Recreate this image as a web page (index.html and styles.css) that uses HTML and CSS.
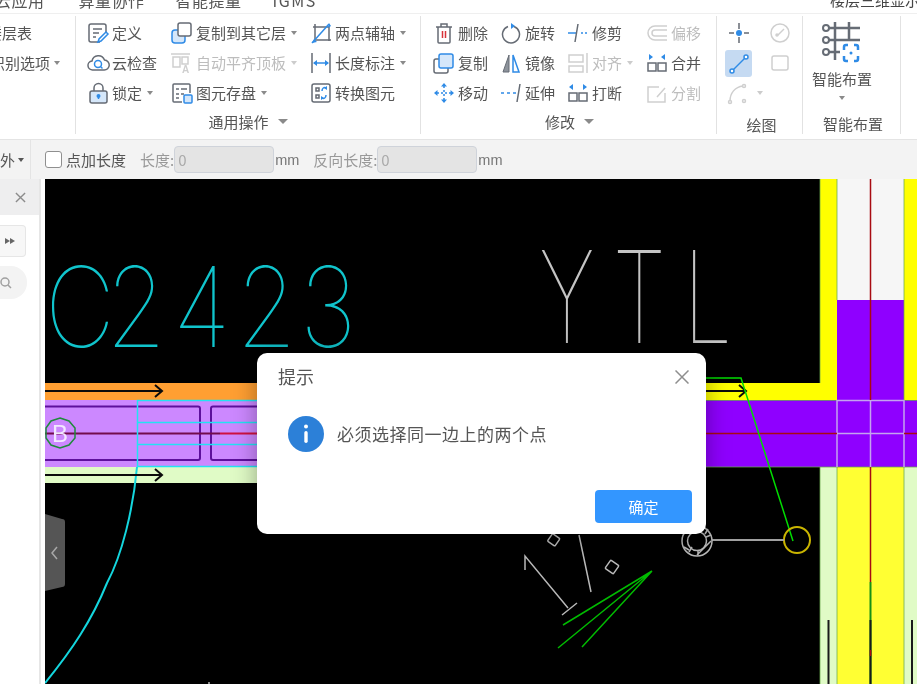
FILE: index.html
```html
<!DOCTYPE html>
<html lang="zh-CN">
<head>
<meta charset="utf-8">
<title>提示</title>
<link rel="stylesheet" href="styles.css">
</head>
<body>
<div class="app">
  <header class="menu">
    <span class="menu-item first">云应用</span>
    <span class="menu-item">算量协作</span>
    <span class="menu-item">智能提量</span>
    <span class="menu-item latin">IGMS</span>
    <span class="menu-right">楼层三维显示</span>
  </header>

  <section class="ribbon">
    <div class="group g-first">
      <div class="clip-row r1">楼层表</div>
      <div class="clip-row r2">识别选项<i class="caret"></i></div>
    </div>

    <div class="group g-general">
      <div class="tools">
        <div class="tool"><svg class="ic" viewBox="0 0 22 22"><path class="s" d="M13 20H4a2 2 0 0 1-2-2V4a2 2 0 0 1 2-2h13a2 2 0 0 1 2 2v6"/><path class="s" d="M6 7h9M6 11h6M6 15h3"/><path class="b2" d="M11 20l1-3 7-7 2 2-7 7z"/></svg><span>定义</span></div>
        <div class="tool"><svg class="ic" viewBox="0 0 22 22"><rect class="bf" x="1" y="8" width="13" height="13" rx="3"/><rect class="sw" x="7" y="1" width="13" height="13" rx="2"/></svg><span>复制到其它层</span><i class="caret"></i></div>
        <div class="tool"><svg class="ic" viewBox="0 0 22 22"><path class="s" d="M5 2v16h16M3 5h16v14"/><path class="b2" d="M2 21L19 2"/><path class="bs" d="M19 1l-1 5 3-2zM2 21l5-1-3-3z"/></svg><span>两点辅轴</span><i class="caret"></i></div>

        <div class="tool"><svg class="ic" viewBox="0 0 22 22"><path class="s" d="M6 18a4.5 4.5 0 0 1-1-9 6.5 6.5 0 0 1 12.500-1 5 5 0 0 1-.5 10z"/><circle class="b2" cx="11" cy="12" r="3.500"/><path class="b2" d="M13.500 14.500l2 2"/></svg><span>云检查</span></div>
        <div class="tool off"><svg class="ic" viewBox="0 0 22 22"><path class="d" d="M0 2h19"/><path class="d" d="M2 5h7v10H2zM11 5h6v7h-6z"/><text class="ic-a" x="11" y="21">A</text></svg><span>自动平齐顶板</span><i class="caret"></i></div>
        <div class="tool"><svg class="ic" viewBox="0 0 22 22"><path class="s" d="M2 1v20M20 1v20"/><path class="b2" d="M4 11h14"/><path class="bs" d="M3 11l4-3v6zM19 11l-4-3v6z"/></svg><span>长度标注</span><i class="caret"></i></div>

        <div class="tool"><svg class="ic" viewBox="0 0 22 22"><rect class="lk" x="3" y="9" width="17" height="12" rx="2"/><path class="s" d="M7 9V6a4.500 4.500 0 0 1 9 0v3"/><circle class="bs" cx="11.500" cy="14" r="2"/><path class="b2" d="M11.500 14v3"/></svg><span>锁定</span><i class="caret"></i></div>
        <div class="tool"><svg class="ic" viewBox="0 0 22 22"><path class="s" d="M11 20H3a1 1 0 0 1-1-1V3a1 1 0 0 1 1-1h15a1 1 0 0 1 1 1v8"/><path class="s" d="M5 7h3M10 7h6M5 12h3M10 12h3M5 16h3"/><rect class="bf" x="13" y="13" width="8" height="8" rx="1"/></svg><span>图元存盘</span><i class="caret"></i></div>
        <div class="tool"><svg class="ic" viewBox="0 0 22 22"><rect class="s" x="2" y="2" width="18" height="18" rx="2"/><path class="s" d="M6 6h3v3H6zM6 13h3v3H6z"/><path class="b2" d="M12 9c0-3 2-4 4-3M16 13c0 3-2 4-4 3"/><path class="bs" d="M17 4v4l-3-2zM11 18v-4l3 2z"/></svg><span>转换图元</span></div>
      </div>
      <div class="group-label">通用操作<i class="caret wide"></i></div>
    </div>

    <div class="group g-modify">
      <div class="tools">
        <div class="tool"><svg class="ic" viewBox="0 0 22 22"><path class="s" d="M3 5h16M8 5V2h6v3M5 5v15a1 1 0 0 0 1 1h10a1 1 0 0 0 1-1V5"/><path class="r" d="M9.500 9v7M12.500 9v7"/></svg><span>删除</span></div>
        <div class="tool"><svg class="ic" viewBox="0 0 22 22"><path class="s" d="M14 4.500a8.500 8.500 0 1 1-6 0"/><path class="bs" d="M11 1l4 3-4 3z"/></svg><span>旋转</span></div>
        <div class="tool"><svg class="ic" viewBox="0 0 22 22"><path class="b2" d="M1 11h8"/><path class="s" d="M8 20l3-18"/><path class="b2" d="M14 11h2M18 11h2"/></svg><span>修剪</span></div>
        <div class="tool off"><svg class="ic" viewBox="0 0 22 22"><path class="d" d="M21 4H9a7 7 0 0 0 0 14h12M21 8H9a3 3 0 0 0 0 6h12"/></svg><span>偏移</span></div>

        <div class="tool"><svg class="ic" viewBox="0 0 22 22"><rect class="s" x="1" y="7" width="14" height="14" rx="2"/><rect class="bf" x="6" y="2" width="14" height="14" rx="2"/></svg><span>复制</span></div>
        <div class="tool"><svg class="ic" viewBox="0 0 22 22"><path class="mf" d="M9 3v17H3z"/><path class="b2" d="M13 3v17h6z"/></svg><span>镜像</span></div>
        <div class="tool off"><svg class="ic" viewBox="0 0 22 22"><path class="d" d="M20 1v20M2 3h14v7H2zM2 14h14v6H2z"/></svg><span>对齐</span><i class="caret"></i></div>
        <div class="tool"><svg class="ic" viewBox="0 0 22 22"><rect class="s" x="2" y="11" width="8" height="8"/><rect class="s" x="12" y="11" width="8" height="8"/><path class="bs" d="M3 2l4 3-4 3zM19 2l-4 3 4 3z"/></svg><span>合并</span></div>

        <div class="tool"><svg class="ic" viewBox="0 0 22 22"><path class="b2 dash" d="M11 4v14M4 11h14"/><path class="bs" d="M11 1l3 3.500H8zM11 21l3-3.500H8zM1 11l3.500-3v6zM21 11l-3.500-3v6z"/></svg><span>移动</span></div>
        <div class="tool"><svg class="ic" viewBox="0 0 22 22"><path class="b2" d="M1 11h3M7 11h3M13 11h3"/><path class="s" d="M17 20l3-18"/></svg><span>延伸</span></div>
        <div class="tool"><svg class="ic" viewBox="0 0 22 22"><rect class="s" x="2" y="11" width="8" height="8"/><rect class="s" x="12" y="11" width="8" height="8"/><path class="bs" d="M2 5l4-3v6zM20 5l-4-3v6z"/></svg><span>打断</span></div>
        <div class="tool off"><svg class="ic" viewBox="0 0 22 22"><path class="d" d="M13 5H2v15h17V11M11 15l8-9"/></svg><span>分割</span></div>
      </div>
      <div class="group-label">修改<i class="caret wide"></i></div>
    </div>

    <div class="group g-draw">
      <div class="draw-grid">
        <div class="draw-cell"><svg class="ic" viewBox="0 0 22 22"><path class="s" d="M11 1v6M11 15v6M1 11h5M16 11h5"/><circle class="bs" cx="11" cy="11" r="3"/></svg></div>
        <div class="draw-cell off"><svg class="ic" viewBox="0 0 22 22"><circle class="d" cx="11" cy="11" r="9"/><path class="d" d="M9 13l6-6"/><circle class="d" cx="8" cy="13" r="1"/></svg></div>
        <div class="draw-cell on"><svg class="ic" viewBox="0 0 22 22"><path class="line" d="M5 17L17 5"/><circle class="pt" cx="4" cy="18" r="2"/><circle class="pt" cx="18" cy="4" r="2"/></svg></div>
        <div class="draw-cell off"><svg class="ic" viewBox="0 0 22 22"><rect class="d" x="3" y="4" width="16" height="14" rx="2"/></svg></div>
        <div class="draw-cell wide-cell off"><svg class="ic" viewBox="0 0 22 22"><path class="d" d="M3 19c0-8 5-14 13-15"/><circle class="d" cx="3" cy="20" r="1.500"/><circle class="d" cx="17" cy="4" r="1.500"/><circle class="d" cx="17" cy="19" r="1.500"/></svg><i class="caret"></i></div>
      </div>
      <div class="group-label low">绘图</div>
    </div>

    <div class="group g-smart">
      <div class="smart-big">
        <svg class="big-ic" viewBox="0 0 40 40"><path class="big" d="M7 6H38M7 18H38M7 30H18M13 0V38M27 0V18"/><g class="big-w"><circle cx="4" cy="6" r="3"/><circle cx="4" cy="18" r="3"/><circle cx="4" cy="30" r="3"/></g><path class="big-b" d="M22 28v-3a2 2 0 0 1 2-2h2M32 23h2a2 2 0 0 1 2 2v3M36 34v3a2 2 0 0 1-2 2h-2M26 39h-2a2 2 0 0 1-2-2v-3"/><circle class="bs" cx="29" cy="31" r="1.500"/></svg>
        <div class="smart-text">智能布置</div>
        <i class="caret"></i>
      </div>
      <div class="group-label low">智能布置</div>
    </div>
  </section>

  <section class="props">
    <div class="props-lead">外<i class="caret"></i></div>
    <label class="check"><span class="box"></span>点加长度</label>
    <span class="muted first-field">长度:</span>
    <span class="field">0</span>
    <span class="unit">mm</span>
    <span class="muted second-field">反向长度:</span>
    <span class="field">0</span>
    <span class="unit">mm</span>
  </section>

  <main class="work">
    <aside class="side">
      <div class="side-head"><svg class="side-x" viewBox="0 0 12 12"><path d="M1 1l10 10M11 1L1 11"/></svg></div>
      <div class="side-more"><i class="tri"></i><i class="tri"></i></div>
      <div class="side-search"><svg class="mag" viewBox="0 0 12 12"><circle cx="5" cy="5" r="4"/><path d="M8 8l3 3"/></svg></div>
    </aside>

    <svg class="cad" viewBox="45 179 872 505">
      <rect class="black" x="45" y="179" width="872" height="505"/>

      <text class="cad-t cyan-t" transform="translate(45 0) scale(.87 1)" x="0 70 147 220 293" y="347">C2423</text>
      <text class="cad-t2 white-t" transform="translate(539 0) scale(.68 1)" x="0 108 212" y="343">YTL</text>

      <rect x="45" y="383" width="792" height="17" class="orange"/>
      <rect x="400" y="383" width="437" height="17" class="yellow"/>
      <rect x="45" y="400" width="400" height="67" class="lilac"/>
      <rect x="45" y="467" width="400" height="16" class="pale"/>
      <rect x="445" y="400" width="472" height="67" class="violet"/>

      <rect x="820" y="179" width="17" height="204" class="yellow"/>
      <rect x="904" y="179" width="13" height="221" class="yellow"/>
      <rect x="837" y="179" width="67" height="121" class="paper"/>
      <rect x="837" y="300" width="67" height="100" class="violet"/>
      <rect x="820" y="467" width="17" height="217" class="pale"/>
      <rect x="904" y="467" width="13" height="217" class="pale"/>
      <rect x="837" y="467" width="67" height="217" class="lemon"/>

      <path class="edge-g" d="M706 400.500H917M706 467H917M820 179V383M837 179V300M904 179V400M820 467V684M837 467V684M904 467V684"/>
      <path class="cross" d="M837 400V467M870.500 400V467M904 400V467M837 400.500H904M837 433.500H904"/>
      <path class="red" d="M870.500 179V400M706 433.500H837M904 433.500H917M870.500 467V582"/>
      <path class="green-d" d="M870.500 582V684"/>
      <path class="black-l" d="M828.500 620V684M912 620V684M870.500 620V684"/>
      <path class="red" d="M870.500 650V656"/>

      <path class="pline" d="M45 406.500H198a2 2 0 0 1 2 2V458a2 2 0 0 1-2 2H45M400 406.500H213a2 2 0 0 0-2 2V458a2 2 0 0 0 2 2H400"/>
      <path class="maroon" d="M45 433.500H220"/>
      <path class="crimson" d="M220 433.500H400"/>
      <path class="cy" d="M137.500 467V400.500H400M137.500 422.500H400M137.500 444.500H400M137.500 466.500H400"/>
      <path class="cy arc" d="M137 467C133 510 122 555 107 583C92 620 72 650 45 683"/>

      <path class="arrow" d="M45 391H161M155 385l7 6-7 6M45 475H161M155 469l7 6-7 6M700 391H745M739 385l7 6-7 6"/>

      <polygon class="bubble" points="60,418 69,421 75,428 75,438 69,445 60,448 51,445 46,438 46,428 51,421"/>
      <text class="bubble-t" x="60" y="442">B</text>

      <path class="g-bright" d="M700 378H741L793 541"/>
      <circle class="y-ring" cx="797" cy="540" r="13"/>
      <path class="gray2" d="M712 540H784"/>
      <circle class="gray1" cx="697" cy="541" r="15"/>
      <circle class="gray1" cx="697" cy="541" r="9.500"/>
      <path class="gray1" d="M684 547l5 3M689 552l3-5M698 555l0-4M697 555l14-14M708 529l-3 5M711 535l-5 2"/>
      <path class="gray1" d="M525 570V556L568 608M562 615L577 603M579 535L591 592"/>
      <rect class="gray1" x="549" y="535" width="9" height="9" rx="1" transform="rotate(35 553 540)"/>
      <rect class="gray1" x="607" y="562" width="10" height="10" rx="1" transform="rotate(35 612 567)"/>
      <path class="g-fan" d="M652 571L563 625M652 571L558 648M652 571L582 647"/>
      <path class="gray1" d="M209 684v-2"/>

      <path class="handle" d="M45 514L62 519a3 3 0 0 1 3 3V584a3 3 0 0 1-3 3L45 591z"/>
      <path class="handle-c" d="M57 547l-5 6 5 6"/>
    </svg>

    <div class="dialog">
      <div class="dialog-head"><span>提示</span><svg class="dialog-x" viewBox="0 0 14 14"><path d="M0.500 0.500l13 13M13.500 0.500l-13 13"/></svg></div>
      <div class="dialog-body">
        <svg class="info" viewBox="0 0 36 36"><circle class="info-bg" cx="18" cy="18" r="18"/><rect class="info-i" x="16.300" y="15" width="3.400" height="12" rx="1.700"/><circle class="info-i" cx="18" cy="10.500" r="2"/></svg>
        <span>必须选择同一边上的两个点</span>
      </div>
      <div class="dialog-foot"><button class="ok" type="button">确定</button></div>
    </div>
  </main>
</div>
</body>
</html>
```

FILE: styles.css
```css
* { box-sizing: border-box; }
html, body { margin: 0; padding: 0; background: #fff; }
body { font-family: "Noto Sans CJK SC", "Noto Sans", sans-serif; color: #555; font-size: 15px; }
.app { width: 917px; height: 684px; overflow: hidden; display: flex; flex-direction: column; filter: blur(.35px); }

/* top menu, cut by the window edge */
.menu { height: 14px; flex: none; display: flex; overflow: hidden; background: #fff; border-bottom: 1px solid #efefef; position: relative; }
.menu-item { font-size: 16px; line-height: 16px; letter-spacing: .5px; margin-top: -8px; margin-right: 31px; white-space: nowrap; flex: none; }
.menu-item.first { margin-left: -5px; margin-right: 34px; }
.menu-item.latin { letter-spacing: 1.500px; }
.menu-right { position: absolute; left: 830px; top: -8px; width: 87px; height: 21px; font-size: 15px; line-height: 16px; white-space: nowrap; color: #444; background: #fff; }

/* ribbon */
.ribbon { height: 126px; flex: none; display: flex; background: #fff; border-bottom: 1px solid #e4e4e4; padding-top: 2px; }
.group { height: 118px; flex: none; border-right: 1px solid #e2e2e2; display: flex; flex-direction: column; white-space: nowrap; }
.g-first { width: 76px; overflow: hidden; position: relative; padding-top: 2px; }
.clip-row { height: 30px; line-height: 30px; position: relative; flex: none; display: flex; align-items: center; }
.r1 { margin-left: -13px; }
.r2 { margin-left: -10px; }
.r2 .caret { margin-left: 4px; }
.g-general { width: 345px; padding-left: 11px; }
.g-modify { width: 296px; padding-left: 12px; }
.g-draw { width: 86px; padding-left: 8px; }
.g-smart { width: 98px; }
.tools { display: grid; margin-top: 2px; grid-auto-rows: 30px; }
.g-general .tools { grid-template-columns: 84px 139px 1fr; }
.g-modify .tools { grid-template-columns: 67px 67px 79px 1fr; }
.tool { display: flex; align-items: center; gap: 3px; }
.tool span { padding-bottom: 2px; }
.tool .caret { margin-left: 2px; }
.ic { width: 22px; height: 22px; flex: none; display: block; overflow: visible; }
.off { color: #bdbdbd; }
.caret { display: inline-block; width: 0; height: 0; border: 3.500px solid transparent; border-top: 4px solid #8a8a8a; border-bottom: 0; margin-left: 5px; flex: none; }
.off .caret { border-top-color: #ccc; }
.caret.wide { border-left-width: 5px; border-right-width: 5px; border-top-width: 5px; margin-left: 9px; }
.group-label { height: 28px; display: flex; align-items: center; justify-content: center; color: #555; }
.g-general .group-label { padding-right: 11px; }
.g-modify .group-label { padding-right: 10px; }
.group-label.low { padding-top: 6px; }
.g-draw .group-label { padding-right: 4px; }
.g-smart .group-label { padding-left: 3px; }

/* svg icon strokes */
.s, .sw, .d, .r, .b2, .big, .big-b, .line, .pt { fill: none; stroke-width: 1.500; }
.s, .sw { stroke: #656b74; }
.sw { fill: #fff; }
.d { stroke: #cfcfcf; }
.r { stroke: #d8333a; }
.b2, .line, .pt, .big-b { stroke: #2f8be6; }
.dash { stroke-dasharray: 2 2; }
.bs { fill: #2f8be6; stroke: none; }
.bf { fill: #d5e7fa; stroke: #2f8be6; stroke-width: 1.500; }
.lk { fill: #d5e7fa; stroke: #656b74; stroke-width: 1.500; }
.mf { fill: #8d939b; stroke: #656b74; }
.ic-a { font-family: "Liberation Sans", sans-serif; font-size: 10px; font-weight: 700; fill: #cfcfcf; }
.pt { fill: #fff; }

/* draw group */
.draw-grid { display: grid; grid-template-columns: 27px 27px; column-gap: 14px; grid-auto-rows: 30px; margin-top: 2px; }
.draw-cell { display: flex; align-items: center; justify-content: center; height: 30px; }
.draw-cell.on { background: #c5daf2; border-radius: 3px; height: 27px; margin-top: 2px; }
.wide-cell { grid-column: span 2; justify-content: flex-start; }
.wide-cell .ic { margin-left: 2px; }
.wide-cell .caret { margin-left: 8px; }

/* smart layout */
.smart-big { height: 90px; display: flex; flex-direction: column; align-items: center; padding-right: 19px; padding-top: 6px; }
.big-ic { width: 40px; height: 40px; flex: none; overflow: visible; }
.big { stroke: #666c75; stroke-width: 2.500; fill: none; }
.big-w circle { fill: #fff; stroke: #666c75; stroke-width: 2; }
.big-b { stroke-width: 2.500; }
.smart-text { margin-top: 6px; line-height: 22px; }
.smart-big .caret { margin: 6px 0 0; }

/* property strip */
.props { height: 39px; flex: none; display: flex; align-items: center; background: #f3f3f3; white-space: nowrap; }
.props-lead { width: 31px; height: 39px; border-right: 1px solid #e4e4e4; display: flex; align-items: center; }
.props-lead .caret { margin-left: 3px; border-top-color: #555; }
.check { display: flex; align-items: center; gap: 4px; margin-left: 14px; color: #555; }
.box { width: 17px; height: 17px; background: #fff; border: 1px solid #8f8f8f; border-radius: 3px; flex: none; }
.muted { color: #999; }
.first-field { margin-left: 14px; }
.second-field { margin-left: 10px; }
.field { width: 100px; height: 27px; background: #e4e4e4; border: 1px solid #cfd3da; border-radius: 4px; color: #aaa; padding-left: 3px; line-height: 25px; }
.unit { color: #777; font-family: "Liberation Sans", sans-serif; font-size: 14.500px; width: 28px; margin-left: 1px; }

/* work area */
.work { flex: 1; display: flex; position: relative; min-height: 0; }
.side { width: 45px; flex: none; background: #fff; display: flex; flex-direction: column; position: relative; }
.side::after { content: ""; position: absolute; top: 0; bottom: 0; left: 39px; width: 2px; background: #e6e6e6; }
.side-head { height: 36px; width: 39px; background: #eeeeef; display: flex; align-items: center; justify-content: flex-end; padding-right: 13px; }
.side-x { width: 11px; height: 11px; }
.side-x path { stroke: #8b8b8b; stroke-width: 1.500; fill: none; }
.side-more { width: 26px; height: 32px; margin-top: 10px; background: #f7f7f7; border: 1px solid #e6e6e6; border-left: 0; border-radius: 0 4px 4px 0; display: flex; align-items: center; justify-content: flex-end; padding-right: 10px; }
.tri { width: 0; height: 0; border-left: 5px solid #666; border-top: 3px solid transparent; border-bottom: 3px solid transparent; }
.side-search { width: 27px; height: 33px; margin-top: 9px; background: #f3f3f3; border-radius: 0 16px 16px 0; display: flex; align-items: center; }
.mag { width: 12px; height: 12px; }
.mag circle, .mag path { fill: none; stroke: #a0a0a0; stroke-width: 1.500; }

.cad { flex: 1; min-width: 0; height: 505px; display: block; }
.black { fill: #000; }
.cad-t { font-family: Inter, "Liberation Sans", sans-serif; font-weight: 100; font-size: 111px; }
.cad-t2 { font-family: Inter, "Liberation Sans", sans-serif; font-weight: 100; font-size: 128px; }
.cyan-t { fill: #10c4cc; }
.white-t { fill: #c4c4c4; }
.orange { fill: #ff9f32; }
.yellow { fill: #ffff00; }
.lilac { fill: #cc88ff; }
.pale { fill: #e0fbc6; }
.violet { fill: #8f00ff; }
.paper { fill: #f6f6f6; }
.lemon { fill: #ffff33; }
.edge-g { stroke: #6aa84f; stroke-width: 1; fill: none; opacity: .75; }
.cross { stroke: #c4a3ee; stroke-width: 1.500; fill: none; }
.red { stroke: #a80b12; stroke-width: 1.500; fill: none; }
.green-d { stroke: #169116; stroke-width: 2; fill: none; }
.black-l { stroke: #1a1a1a; stroke-width: 2; fill: none; }
.pline { stroke: #5d109c; stroke-width: 2; fill: none; }
.maroon { stroke: #720c4c; stroke-width: 2; fill: none; }
.crimson { stroke: #cf1140; stroke-width: 2; fill: none; }
.cy { stroke: #22e3f2; stroke-width: 1.500; fill: none; }
.cy.arc { stroke: #14d6de; stroke-width: 2; }
.arrow { stroke: #0b0b0b; stroke-width: 2; fill: none; }
.bubble { fill: none; stroke: #1f8a3c; stroke-width: 1.500; }
.bubble-t { font-family: "Liberation Sans", sans-serif; font-size: 24px; fill: #f2e8ff; text-anchor: middle; }
.g-bright { stroke: #00dd00; stroke-width: 1.500; fill: none; }
.y-ring { stroke: #c9b400; stroke-width: 2; fill: none; }
.gray2 { stroke: #a0a0a0; stroke-width: 2; fill: none; }
.gray1 { stroke: #b8b8b8; stroke-width: 1.500; fill: none; }
.g-fan { stroke: #00bb00; stroke-width: 1.500; fill: none; }
.handle { fill: #555; }
.handle-c { fill: none; stroke: #a8a8a8; stroke-width: 1.500; }

/* dialog */
.dialog { position: absolute; left: 257px; top: 174px; width: 449px; height: 181px; background: #fff; border-radius: 10px; box-shadow: 0 0 24px rgba(0,0,0,.35); display: flex; flex-direction: column; }
.dialog-head { height: 48px; padding: 11px 17px 0 21px; display: flex; justify-content: space-between; align-items: flex-start; font-size: 18px; line-height: 24px; flex: none; }
.dialog-x { width: 14px; height: 14px; margin-top: 6px; }
.dialog-x path { stroke: #8e8e8e; stroke-width: 1.500; fill: none; }
.dialog-body { height: 90px; padding: 15px 0 0 31px; display: flex; align-items: flex-start; gap: 13px; font-size: 17px; letter-spacing: .5px; line-height: 36px; flex: none; }
.info { width: 36px; height: 36px; flex: none; }
.info-bg { fill: #2c80d8; }
.info-i { fill: #fff; }
.dialog-foot { display: flex; justify-content: flex-end; padding-right: 14px; margin-top: -1px; }
.ok { width: 97px; height: 33px; background: #3396ff; color: #fff; border: 0; border-radius: 4px; font: inherit; font-size: 15px; padding: 0; }
```
